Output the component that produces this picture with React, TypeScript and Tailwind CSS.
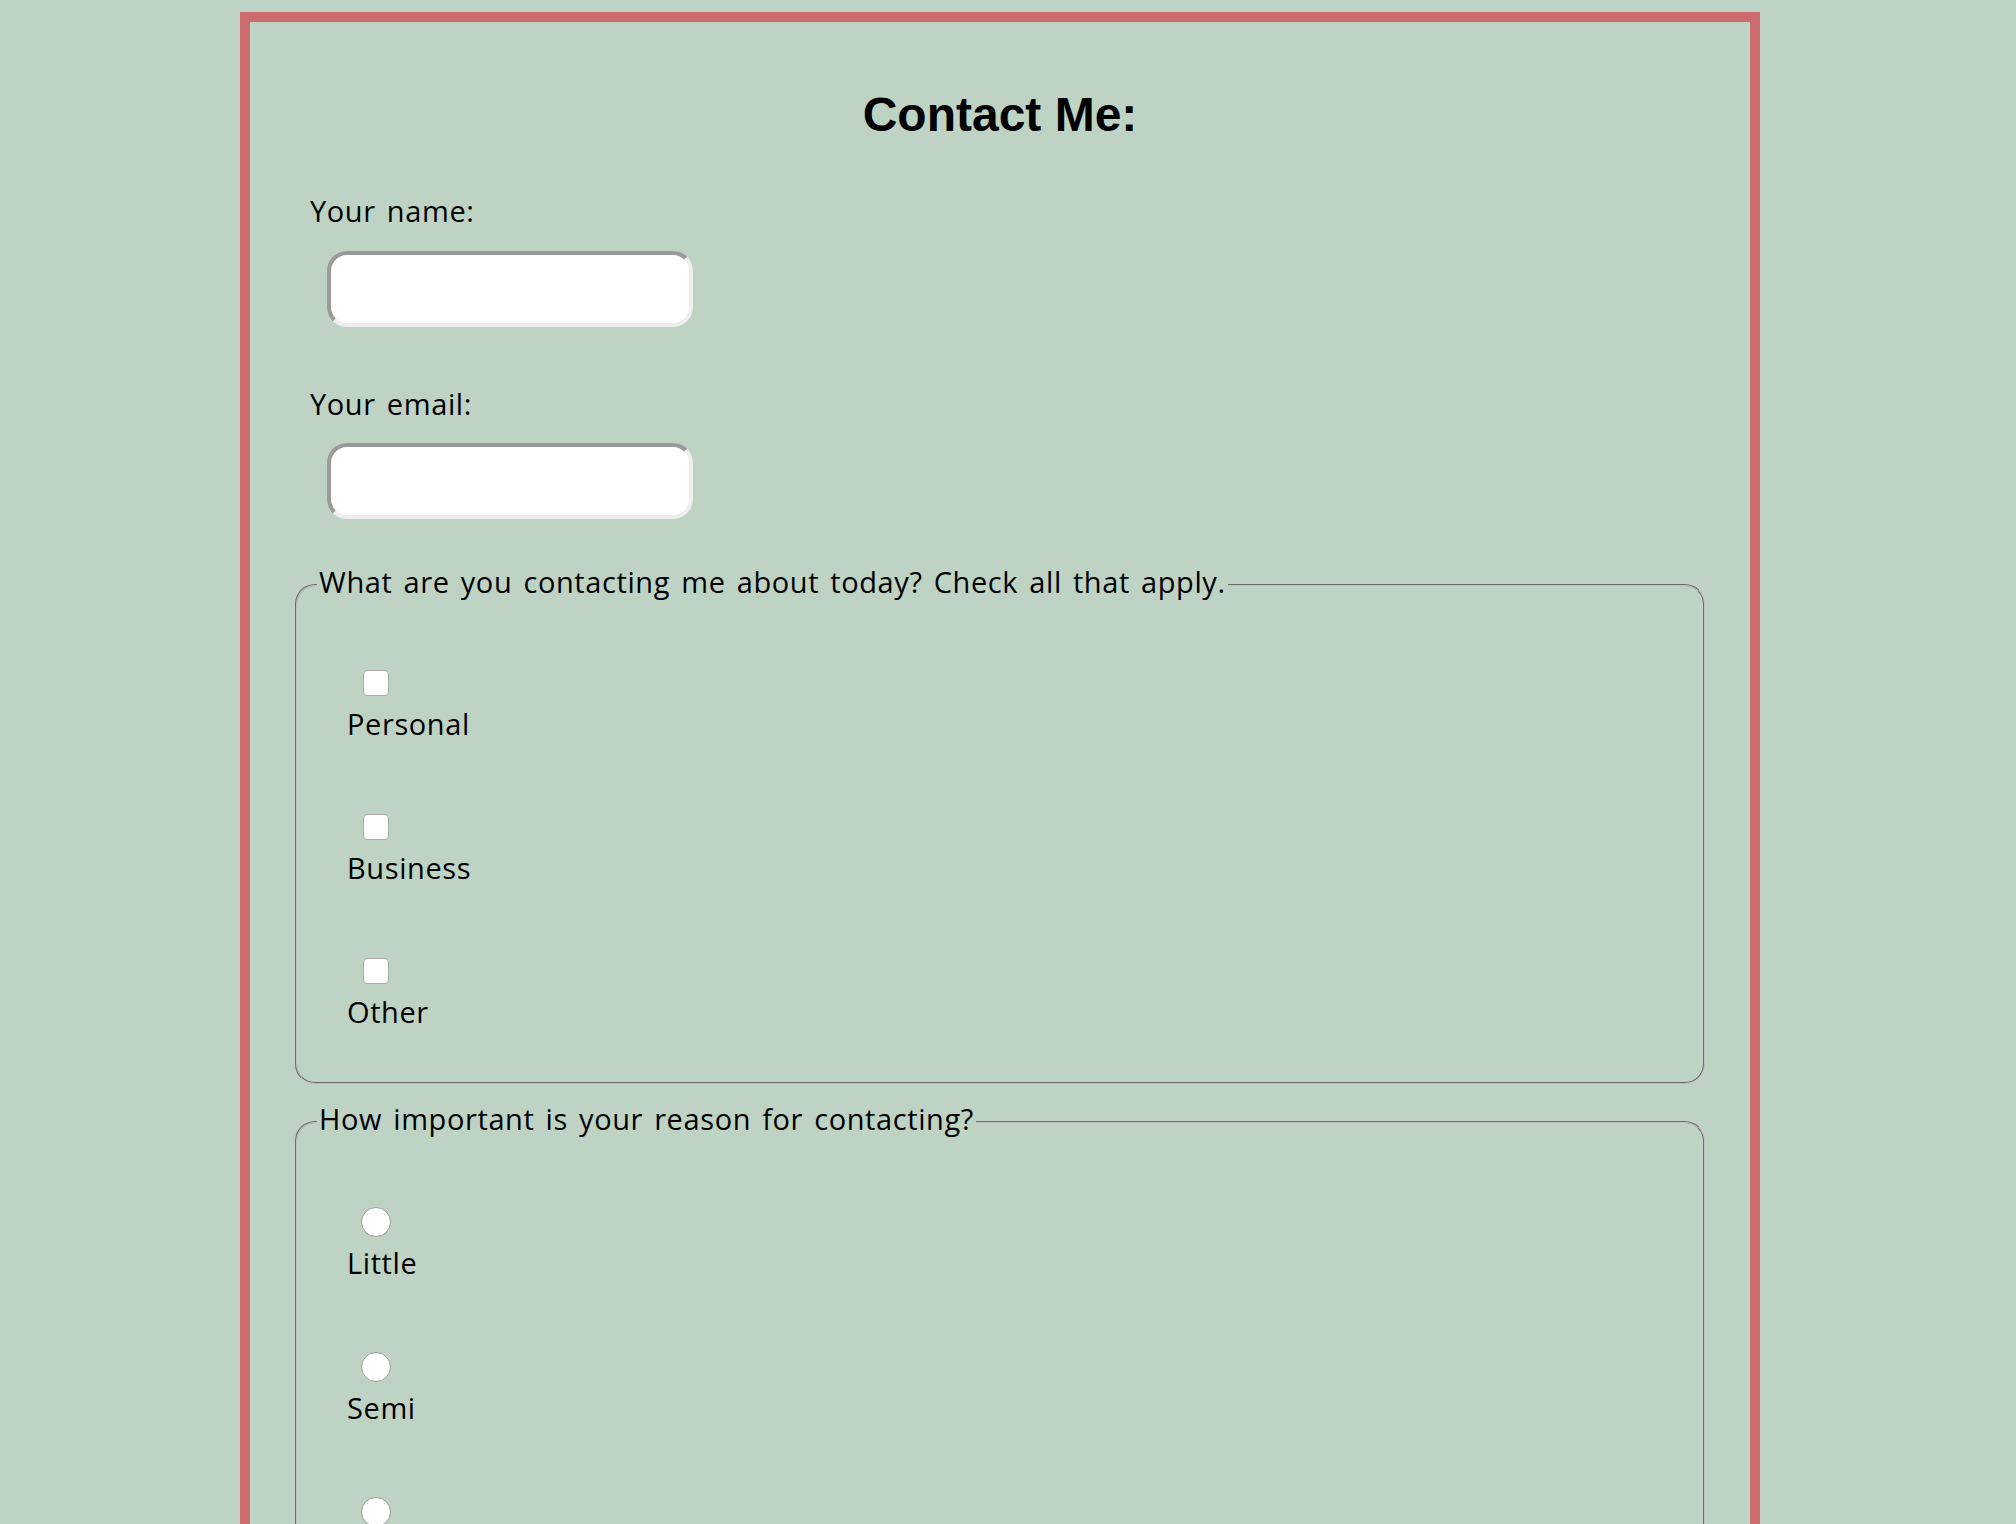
import React from "react";

const labelCls = "block text-[29px] leading-none tracking-[0.6px] [word-spacing:3px] text-black font-['Open_Sans','Lato',sans-serif]";

const App: React.FC = () => {
  const topics = ["Personal", "Business", "Other"];
  const levels = ["Little", "Semi", "Very"];

  return (
    <div className="min-h-screen bg-[#bed3c4] pt-[12px] pb-[40px]">
      <div className="ml-[240px] w-[1520px] border-[10px] border-[#cd6b6e] px-[45px] pt-[69px] pb-[60px]">
        <h1 className="text-center text-[48px] leading-none font-bold text-black font-['Liberation_Sans',Arial,sans-serif]">
          Contact Me:
        </h1>
        <form>
          <label className={`${labelCls} mt-[57px] ml-[15px]`}>Your name:</label>
          <input
            type="text"
            className="mt-[26px] ml-[32px] block h-[76px] w-[366px] rounded-[20px] border-4 border-[#eeeeee] [border-style:inset] bg-white outline-none"
          />

          <label className={`${labelCls} mt-[62px] ml-[15px]`}>Your email:</label>
          <input
            type="email"
            className="mt-[25px] ml-[32px] block h-[76px] w-[366px] rounded-[20px] border-4 border-[#eeeeee] [border-style:inset] bg-white outline-none"
          />

          <fieldset className="mt-[48px] rounded-[20px] border-2 border-[#c0c0c0] [border-style:groove] px-[20px]">
            <legend className={`${labelCls} px-[2px] pb-[6px]`}>
              What are you contacting me about today? Check all that apply.
            </legend>
            <div className="pl-[30px] pt-[68px] pb-[56px] flex flex-col gap-[76px]">
              {topics.map((t) => (
                <div key={t}>
                  <input
                    type="checkbox"
                    className="ml-[16px] block h-[26px] w-[26px] appearance-none rounded-[4px] border border-[#a9a9a9] bg-white"
                  />
                  <label className={`${labelCls} mt-[13px]`}>{t}</label>
                </div>
              ))}
            </div>
          </fieldset>

          <fieldset className="mt-[20px] rounded-[20px] border-2 border-[#c0c0c0] [border-style:groove] px-[20px]">
            <legend className={`${labelCls} px-[2px] pb-[6px]`}>
              How important is your reason for contacting?
            </legend>
            <div className="pl-[30px] pt-[68px] pb-[56px] flex flex-col gap-[75px]">
              {levels.map((l) => (
                <div key={l}>
                  <input
                    type="radio"
                    name="importance"
                    className="ml-[14px] block h-[30px] w-[30px] appearance-none rounded-full border border-[#9c9c9c] bg-white"
                  />
                  <label className={`${labelCls} mt-[11px]`}>{l}</label>
                </div>
              ))}
            </div>
          </fieldset>
        </form>
      </div>
    </div>
  );
};

export default App;
